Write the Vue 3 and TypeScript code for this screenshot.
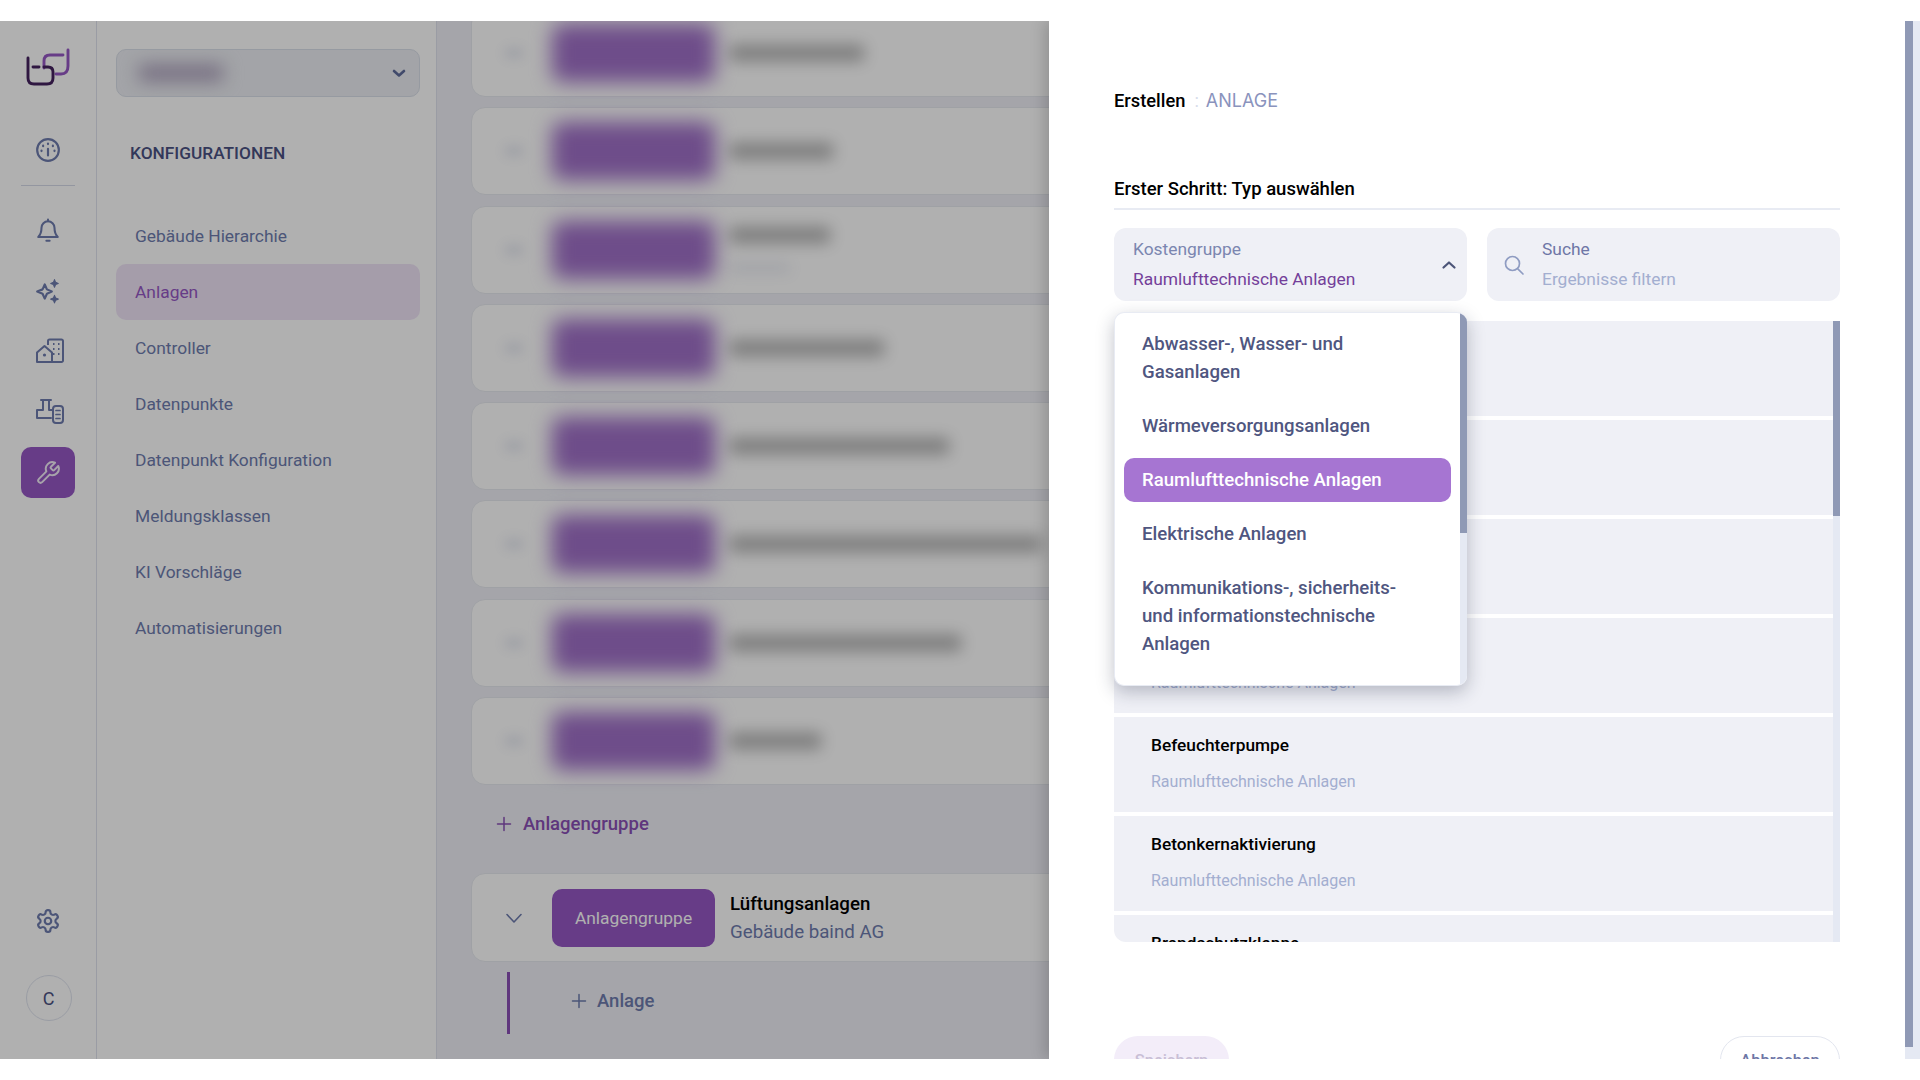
<script setup lang="ts">
const navItems: string[] = ['Gebäude Hierarchie', 'Anlagen', 'Controller', 'Datenpunkte', 'Datenpunkt Konfiguration', 'Meldungsklassen', 'KI Vorschläge', 'Automatisierungen']
const blurredCards: { w: number; sub?: number }[] = [{ w: 134 }, { w: 103 }, { w: 100, sub: 60 }, { w: 154 }, { w: 219 }, { w: 311 }, { w: 231 }, { w: 91 }]
const rows: { title: string; sub: boolean }[] = [
  { title: '', sub: false },
  { title: '', sub: false },
  { title: '', sub: false },
  { title: '', sub: true },
  { title: 'Befeuchterpumpe', sub: true },
  { title: 'Betonkernaktivierung', sub: true },
  { title: 'Brandschutzklappe', sub: true },
]
const options: { label: string; active?: boolean }[] = [
  { label: 'Abwasser-, Wasser- und Gasanlagen' },
  { label: 'Wärmeversorgungsanlagen' },
  { label: 'Raumlufttechnische Anlagen', active: true },
  { label: 'Elektrische Anlagen' },
  { label: 'Kommunikations-, sicherheits- und informationstechnische Anlagen' },
]
</script>

<template>
  <div class="screen">
    <div class="frame">
      <div class="app">
        <aside class="rail">
          <svg class="logo" width="44" height="38" viewBox="0 0 44 38" fill="none" stroke-width="2.900" stroke-linecap="round">
            <path d="M37 7H24Q18 7 18 13V20" stroke="#9558c4" />
            <path d="M42 2V18Q42 26 35 26H30" stroke="#9558c4" />
            <path d="M2 10V30Q2 36 8 36H21Q27 36 27 30V24Q27 19 22 19H18" stroke="#45225f" />
            <path d="M7 19H13" stroke="#45225f" />
          </svg>
          <div class="cell first">
            <svg width="26" height="26" viewBox="0 0 24 24" fill="none" stroke="#6e7cae" stroke-width="2" stroke-linecap="round">
              <circle cx="12" cy="12" r="10" />
              <path d="M12 11v6" />
              <path d="M12 6v.5M7.500 8v.5M16.500 8v.5M6 12.500v.5M18 12.500v.5" />
            </svg>
          </div>
          <div class="divider"></div>
          <div class="cell bell">
            <svg width="26" height="26" viewBox="0 0 24 24" fill="none" stroke="#6e7cae" stroke-width="1.900" stroke-linecap="round" stroke-linejoin="round">
              <path d="M12 3a6 6 0 0 0-6 6c0 5-1.500 7-3 8.500h18C19.500 16 18 14 18 9a6 6 0 0 0-6-6z" />
              <path d="M12 1.500V3M10.500 21h3" />
            </svg>
          </div>
          <div class="cell">
            <svg width="26" height="26" viewBox="0 0 24 24" fill="none" stroke="#6e7cae" stroke-width="2" stroke-linejoin="round">
              <path d="M9 6l2 4.500L15.500 12.500 11 14.500 9 19l-2-4.500L2 12.500l5-2z" />
              <path d="M18 1.500l1 2.500 2.500 1-2.500 1-1 2.500-1-2.500-2.500-1 2.500-1zM18 16l1 2.500 2.500 1-2.500 1-1 2.500-1-2.500-2.500-1 2.500-1z" fill="#6e7cae" stroke-width="1" />
            </svg>
          </div>
          <div class="cell nudge">
            <svg width="30" height="26" viewBox="0 0 30 26" fill="none" stroke="#6e7cae" stroke-width="2" stroke-linejoin="round">
              <path d="M2 24V14.500L9.500 8 17 14.500V24z" />
              <path d="M13 7V3a1.500 1.500 0 0 1 1.500-1.500h12A1.500 1.500 0 0 1 28 3v19.500a1.500 1.500 0 0 1-1.500 1.500H17" />
              <circle cx="9.500" cy="17" r="1.600" fill="#6e7cae" stroke="none" />
              <path d="M18 6h1.500M23 6h1.500M18 11h1.500M23 11h1.500M18 16h1.500M23 16h1.500" stroke-width="2.200" />
            </svg>
          </div>
          <div class="cell nudge">
            <svg width="30" height="26" viewBox="0 0 30 26" fill="none" stroke="#6e7cae" stroke-width="2" stroke-linejoin="round" stroke-linecap="round">
              <path d="M6 2h10M8 2v10H2v8h14M14 2v10h3" />
              <rect x="18" y="8" width="10" height="17" rx="3" />
              <path d="M21 12.500h4M21 16.500h4M21 20.500h4" stroke-width="1.700" />
            </svg>
          </div>
          <div class="cell active">
            <svg width="26" height="26" viewBox="0 0 24 24" fill="none" stroke="#f2ecf7" stroke-width="1.800" stroke-linecap="round" stroke-linejoin="round">
              <path d="M14.700 6.300a1 1 0 0 0 0 1.400l1.600 1.600a1 1 0 0 0 1.400 0l3.770-3.770a6 6 0 0 1-7.940 7.940l-6.910 6.910a2.120 2.120 0 0 1-3-3l6.910-6.910a6 6 0 0 1 7.940-7.940l-3.760 3.760z" />
            </svg>
          </div>
          <div class="cell gear">
            <svg width="26" height="26" viewBox="0 0 24 24" fill="none" stroke="#6e7cae" stroke-width="2" stroke-linecap="round" stroke-linejoin="round">
              <path d="M12.220 2h-.44a2 2 0 0 0-2 2v.18a2 2 0 0 1-1 1.730l-.43.25a2 2 0 0 1-2 0l-.15-.08a2 2 0 0 0-2.730.73l-.22.38a2 2 0 0 0 .73 2.730l.15.1a2 2 0 0 1 1 1.720v.51a2 2 0 0 1-1 1.740l-.15.09a2 2 0 0 0-.73 2.730l.22.38a2 2 0 0 0 2.730.73l.15-.08a2 2 0 0 1 2 0l.43.25a2 2 0 0 1 1 1.730V20a2 2 0 0 0 2 2h.44a2 2 0 0 0 2-2v-.18a2 2 0 0 1 1-1.730l.43-.25a2 2 0 0 1 2 0l.15.08a2 2 0 0 0 2.730-.73l.22-.39a2 2 0 0 0-.73-2.730l-.15-.08a2 2 0 0 1-1-1.740v-.5a2 2 0 0 1 1-1.740l.15-.09a2 2 0 0 0 .73-2.730l-.22-.38a2 2 0 0 0-2.730-.73l-.15.08a2 2 0 0 1-2 0l-.43-.25a2 2 0 0 1-1-1.730V4a2 2 0 0 0-2-2z" />
              <circle cx="12" cy="12" r="3" />
            </svg>
          </div>
          <div class="avatar">C</div>
        </aside>

        <nav class="panel">
          <div class="building-select">
            <span class="smudge"></span>
            <svg width="16" height="16" viewBox="0 0 16 16" fill="none" stroke="#5f6c9c" stroke-width="2.600" stroke-linecap="round" stroke-linejoin="round"><path d="M3 6l5 4.500L13 6" /></svg>
          </div>
          <h2 class="panel-title">KONFIGURATIONEN</h2>
          <ul class="nav">
            <li v-for="item in navItems" :key="item" :class="{ current: item === 'Anlagen' }">{{ item }}</li>
          </ul>
        </nav>

        <main class="content">
          <div class="cards">
            <div v-for="(card, i) in blurredCards" :key="i" class="card">
              <span class="fog-chevron"></span>
              <span class="fog-tag"></span>
              <div class="fog-text">
                <span class="fog-line" :style="{ width: card.w + 'px' }"></span>
                <span v-if="card.sub" class="fog-sub" :style="{ width: card.sub + 'px' }"></span>
              </div>
            </div>
          </div>
          <div class="add-group">
            <svg width="16" height="16" viewBox="0 0 16 16" stroke="#8a4fb5" stroke-width="1.500" stroke-linecap="round"><path d="M8 1.500v13M1.500 8h13" /></svg>
            <span>Anlagengruppe</span>
          </div>
          <div class="card group">
            <svg class="chev" width="18" height="12" viewBox="0 0 18 12" fill="none" stroke="#6e7cae" stroke-width="1.600" stroke-linecap="round" stroke-linejoin="round"><path d="M2 2.500l7 7.500 7-7.500" /></svg>
            <span class="tag">Anlagengruppe</span>
            <div class="group-text">
              <strong>Lüftungsanlagen</strong>
              <span>Gebäude baind AG</span>
            </div>
          </div>
          <div class="children">
            <div class="add-item">
              <svg width="16" height="16" viewBox="0 0 16 16" stroke="#6e7cae" stroke-width="1.500" stroke-linecap="round"><path d="M8 1.500v13M1.500 8h13" /></svg>
              <span>Anlage</span>
            </div>
          </div>
        </main>
        <div class="overlay"></div>
      </div>

      <section class="drawer">
        <header class="crumbs">
          <span class="crumb-main">Erstellen</span>
          <span class="crumb-sep">:</span>
          <span class="crumb-sub">ANLAGE</span>
        </header>
        <h3 class="step">Erster Schritt: Typ auswählen</h3>
        <div class="filters">
          <div class="field select">
            <div class="field-text">
              <span class="field-label">Kostengruppe</span>
              <span class="field-value">Raumlufttechnische Anlagen</span>
            </div>
            <svg width="16" height="16" viewBox="0 0 16 16" fill="none" stroke="#4c5578" stroke-width="2.200" stroke-linecap="round" stroke-linejoin="round"><path d="M2.500 10.500L8 5.500l5.500 5" /></svg>
            <div class="dropdown">
              <ul class="options">
                <li v-for="o in options" :key="o.label" :class="{ on: o.active }">{{ o.label }}</li>
              </ul>
              <div class="bar"><span class="bar-thumb"></span></div>
            </div>
          </div>
          <div class="field search">
            <svg width="22" height="22" viewBox="0 0 22 22" fill="none" stroke="#8f9cc2" stroke-width="1.700" stroke-linecap="round"><circle cx="9.500" cy="9.500" r="7" /><path d="M14.800 14.800L20 20" /></svg>
            <div class="field-text">
              <span class="field-label dark">Suche</span>
              <span class="field-hint">Ergebnisse filtern</span>
            </div>
          </div>
        </div>
        <div class="list-wrap">
          <div class="list">
            <div v-for="(r, i) in rows" :key="i" class="row">
              <span class="row-title">{{ r.title }}</span>
              <span v-if="r.sub" class="row-sub">Raumlufttechnische Anlagen</span>
            </div>
          </div>
          <div class="bar list-bar"><span class="bar-thumb"></span></div>
        </div>
        <footer class="actions">
          <button class="save">Speichern</button>
          <button class="cancel">Abbrechen</button>
        </footer>
      </section>
      <div class="page-bar"><span class="page-thumb"></span></div>
    </div>
  </div>
</template>

<style>
html, body { margin: 0; background: #fff; overflow: hidden; }
</style>

<style scoped>
* { box-sizing: border-box; }
.screen { width: 1920px; height: 1080px; padding-top: 21px; background: #fff; font-family: Roboto, "Liberation Sans", sans-serif; overflow: hidden; }
.frame { position: relative; display: flex; width: 1920px; height: 1038px; overflow: hidden; }
.app { position: relative; display: flex; flex: 0 0 1049px; width: 1049px; overflow: hidden; background: #eff0f6; }
.overlay { position: absolute; inset: 0; background: rgba(0, 0, 0, .31); }

.rail { flex: 0 0 97px; display: flex; flex-direction: column; align-items: center; padding-top: 27px; padding-bottom: 38px; background: #fff; border-right: 1px solid #dfe3ee; }
.logo { flex: none; }
.cell { flex: none; display: flex; align-items: center; justify-content: center; width: 54px; height: 51px; margin-top: 9px; border-radius: 10px; }
.cell.first { margin-top: 38px; }
.nudge { padding-left: 4px; }
.bell { margin-top: 19px; }
.divider { flex: none; width: 54px; height: 1px; margin-top: 10px; background: #d5dae8; }
.active { margin-top: 11px; background: #9558c4; }
.gear { margin-top: auto; }
.avatar { flex: none; display: flex; align-items: center; justify-content: center; width: 46px; height: 46px; margin: 29px 0 0 1px; border: 1px solid #dfe3ee; border-radius: 50%; color: #4b5183; font-size: 18px; }

.panel { flex: 0 0 340px; padding: 28px 16px 0 19px; background: #fff; border-right: 1px solid #dfe3ee; }
.building-select { position: relative; display: flex; align-items: center; justify-content: flex-end; height: 48px; padding-right: 12px; background: #eceef3; border: 1px solid #dadfe9; border-radius: 10px; overflow: hidden; }
.smudge { position: absolute; left: 22px; top: 15px; width: 84px; height: 16px; background: #a89cb8; filter: blur(9px); }
.panel-title { margin: 46px 0 45px 14px; font-size: 17.300px; line-height: 20px; font-weight: 500; color: #4b5183; }
.nav { list-style: none; margin: 0; padding: 0; }
.nav li { display: flex; align-items: center; height: 56px; padding-left: 19px; border-radius: 10px; font-size: 17.400px; color: #6e7cae; }
.nav li.current { background: #f0e4f7; color: #9558c4; }

.content { flex: 1; min-width: 0; padding-left: 34px; overflow: hidden; }
.cards { display: flex; flex-direction: column; gap: 10.300px; margin-top: -12px; }
.card { display: flex; align-items: center; flex: none; width: 800px; height: 88px; background: #fff; border: 1px solid #e7e9f0; border-radius: 14px; }
.fog-chevron { width: 18px; height: 10px; margin-left: 33px; background: #6e7cae; opacity: .18; filter: blur(6px); }
.fog-tag { flex: none; width: 163px; height: 58px; margin-left: 29px; border-radius: 10px; background: #a070c8; filter: blur(10px); }
.fog-text { display: flex; flex-direction: column; gap: 20px; margin-left: 15px; }
.fog-line { display: block; height: 16px; background: #000; opacity: .3; filter: blur(8px); }
.fog-sub { display: block; height: 10px; background: #6e7cae; opacity: .14; filter: blur(7px); }

.add-group { display: flex; align-items: center; gap: 11px; height: 24px; margin: 27px 0 37px 25px; font-size: 18.500px; font-weight: 500; color: #8a4fb5; }
.card.group { height: 89px; margin: 0; }
.chev { flex: none; margin-left: 33px; }
.tag { display: flex; align-items: center; justify-content: center; width: 163px; height: 58px; margin-left: 29px; border-radius: 10px; background: #9558c4; color: #fff; font-size: 17.400px; }
.group-text { display: flex; flex-direction: column; gap: 4px; margin-left: 15px; font-size: 18.700px; line-height: 24px; color: #6e7cae; }
.group-text strong { font-weight: 500; color: #000; }
.children { display: flex; align-items: center; width: 300px; height: 62px; margin: 10px 0 0 36px; padding-bottom: 5px; border-left: 3px solid #8a4fb5; }
.add-item { display: flex; align-items: center; gap: 10px; margin-left: 61px; font-size: 18.500px; font-weight: 500; color: #6e7cae; }

.drawer { flex: 1; min-width: 0; padding: 67px 80px 0 65px; background: #fff; box-shadow: -4px 0 14px rgba(0, 0, 0, .18); z-index: 1; }
.crumbs { display: flex; align-items: center; height: 24px; font-size: 18.300px; }
.crumb-main { font-weight: 500; color: #000; }
.crumb-sep { margin: 0 7px 0 9px; color: #d7dcea; }
.crumb-sub { font-family: Inter, sans-serif; font-size: 18px; color: #8a93bd; }
.step { margin: 65px 0 0; padding-bottom: 8px; height: 33px; border-bottom: 2px solid #e8ebf3; font-size: 18.500px; line-height: 24px; font-weight: 500; color: #000; }
.filters { display: flex; gap: 20px; margin-top: 18px; }
.field { position: relative; display: flex; align-items: center; flex: none; width: 353px; height: 73px; background: #eff0f6; border-radius: 12px; }
.search { gap: 17px; padding-left: 16px; }
.select { justify-content: space-between; padding: 0 10px 0 19px; }
.field-text { display: flex; flex-direction: column; gap: 9px; font-size: 17.400px; line-height: 21px; }
.field-label { color: #7b86b0; }
.field-label.dark { color: #6e76a6; }
.field-value { color: #743f9a; }
.field-hint { color: #a3aed0; }
.dropdown { position: absolute; z-index: 3; left: 0; top: 84px; display: flex; width: 353px; height: 374px; background: #fff; border: 1px solid #e8ebf3; border-right: 0; border-radius: 10px; box-shadow: 0 6px 18px rgba(30, 35, 60, .28); overflow: hidden; }
.options { flex: 1; list-style: none; margin: 0; padding: 9px 9px 20px 9px; display: flex; flex-direction: column; gap: 10px; }
.options li { padding: 8px 50px 8px 18px; border-radius: 10px; font-size: 18.600px; line-height: 28px; font-weight: 500; color: #4f5680; }
.options li.on { background: #a675d2; color: #fff; }
.bar { flex: none; width: 7px; background: #e5e9f3; }
.bar-thumb { display: block; width: 100%; height: 220px; background: #8f99b5; }
.list-wrap { position: relative; display: flex; height: 621px; margin-top: 20px; }
.list { flex: 1; display: flex; flex-direction: column; gap: 4px; overflow: hidden; border-radius: 0 0 0 12px; }
.list-bar .bar-thumb { height: 195px; }
.row { flex: none; display: flex; flex-direction: column; height: 95px; padding: 16px 30px 0 37px; background: #eff0f6; }
.row-title { height: 24px; font-size: 17.300px; line-height: 24px; font-weight: 500; color: #000; }
.row-sub { margin-top: 13px; font-size: 16px; line-height: 24px; color: #a3aed0; }
.actions { display: flex; justify-content: space-between; margin-top: 94px; }
.save, .cancel { height: 48px; padding: 0; border-radius: 24px; font-family: Roboto, sans-serif; font-size: 16.400px; font-weight: 500; }
.save { width: 115px; background: #f3edf9; border: 0; color: #c9bfd6; }
.cancel { width: 120px; background: #fff; border: 1px solid #e3e6ef; color: #6e76a6; }
.page-bar { position: absolute; z-index: 2; right: 0; top: 0; bottom: 0; width: 15px; background: #e5e9f3; }
.page-thumb { display: block; width: 8px; height: 1026px; background: #8f99b5; }
</style>
